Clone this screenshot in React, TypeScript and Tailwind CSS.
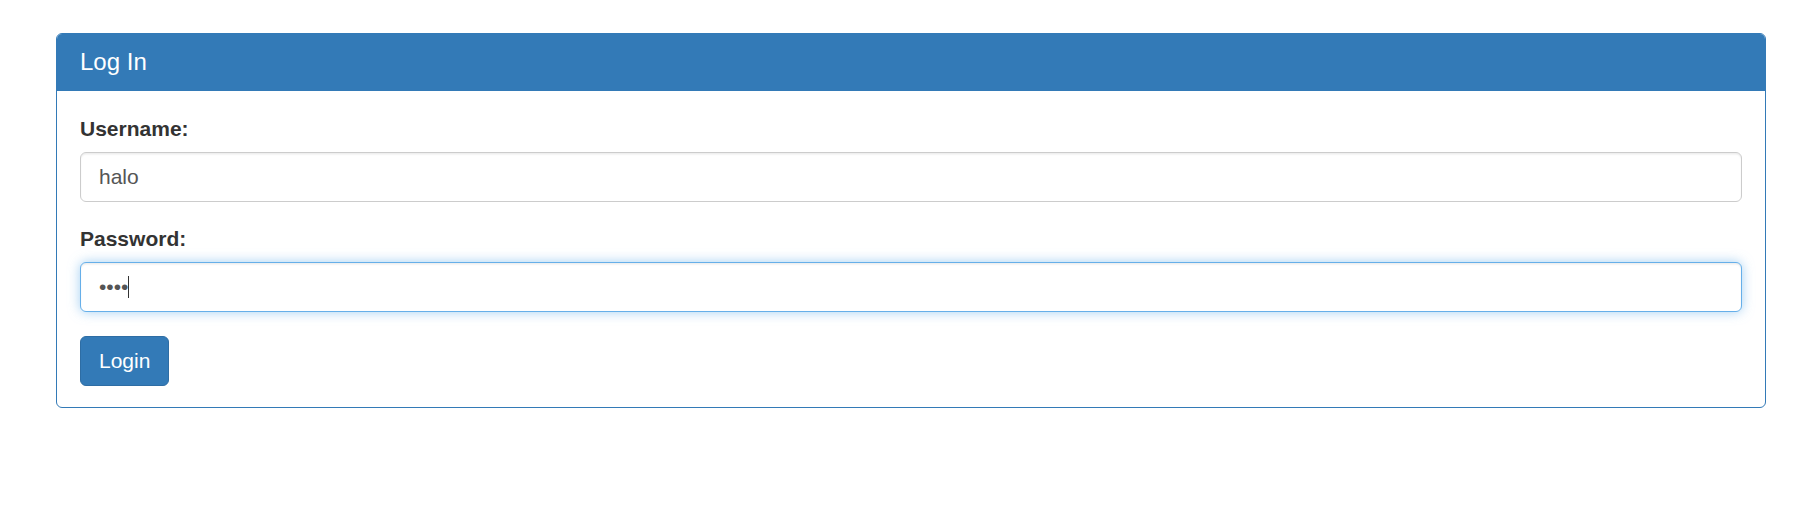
import { useState } from "react";

export default function App() {
    const [username, setUsername] = useState("halo");
    const [password, setPassword] = useState("halo");

    return (
        <div className="min-h-[528px] bg-white pt-[33px] font-['Liberation_Sans',Arial,sans-serif] text-[#333]">
            <div className="ml-[56px] w-[1710px] overflow-hidden rounded-[6px] border border-[#337ab7] bg-white">
                <div className="border-b border-[#337ab7] bg-[#337ab7] px-[23px] pt-[15px] pb-[15px]">
                    <h3 className="text-[24px] leading-[26px] text-white">Log In</h3>
                </div>

                <form
                    className="px-[23px] pt-[23px] pb-[21px]"
                    onSubmit={(e) => e.preventDefault()}
                >
                    <div className="mb-[22px]">
                        <label htmlFor="username" className="mb-[8px] block text-[21px] leading-[30px] font-bold">
                            Username:
                        </label>
                        <input
                            id="username"
                            type="text"
                            value={username}
                            onChange={(e) => setUsername(e.target.value)}
                            className="block h-[50px] w-full rounded-[6px] border border-[#ccc] bg-white px-[18px] text-[21px] text-[#555] shadow-[inset_0_1.5px_1.5px_rgba(0,0,0,0.075)] outline-none"
                        />
                    </div>

                    <div className="mb-[24px]">
                        <label htmlFor="password" className="mb-[8px] block text-[21px] leading-[30px] font-bold">
                            Password:
                        </label>
                        <div className="relative">
                            <input
                                id="password"
                                type="password"
                                value={password}
                                onChange={(e) => setPassword(e.target.value)}
                                className="block h-[50px] w-full rounded-[6px] border border-[#66afe9] bg-white px-[18px] text-[21px] text-[#555] caret-transparent shadow-[inset_0_1.5px_1.5px_rgba(0,0,0,0.075),0_0_12px_rgba(102,175,233,0.6)] outline-none"
                            />
                            {/* caret, the field is shown focused */}
                            <span className="pointer-events-none absolute top-[14px] left-[48px] h-[22px] w-px bg-[#333]" />
                        </div>
                    </div>

                    <button
                        type="submit"
                        className="h-[50px] rounded-[6px] border border-[#2e6da4] bg-[#337ab7] px-[18px] text-[21px] leading-[30px] text-white"
                    >
                        Login
                    </button>
                </form>
            </div>
        </div>
    );
}
